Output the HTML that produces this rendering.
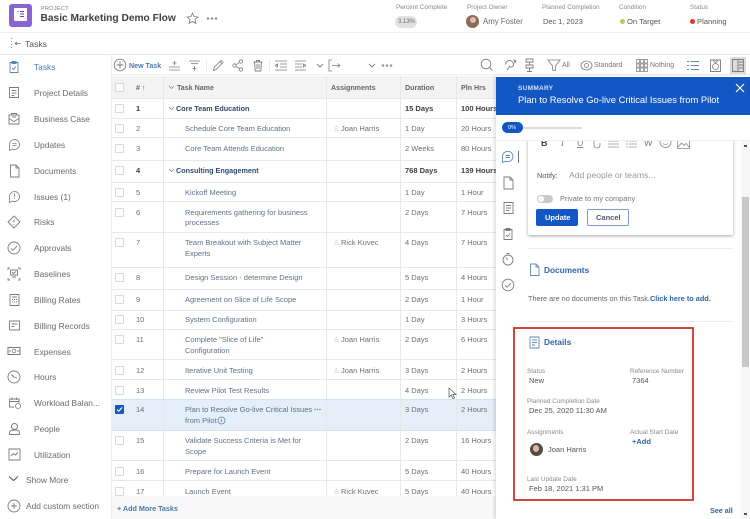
<!DOCTYPE html>
<html><head><meta charset="utf-8">
<style>
html,body{margin:0;padding:0;background:#fff}
#p{position:relative;width:750px;height:519px;overflow:hidden;background:#fff;font-family:"Liberation Sans",sans-serif;font-size:7.5px;color:#5b6675;filter:blur(.35px)}
#p div,#p span.a,#p svg.a{position:absolute}
.t{white-space:nowrap;line-height:10px}
.n{color:#5f7188}
.k{color:#2f4a6b;font-weight:bold;font-size:7.2px}
.g{color:#6e6e6e}
.d{color:#3e3e3e;font-weight:bold}
.h{color:#666;font-weight:bold;font-size:7.1px}
.s{color:#6b6b6b;font-size:8.4px}
.l{background:#e8e8e8}
.c{width:7px;height:7px;border:1px solid #d8d8d8;background:#fff;border-radius:1px;left:115px}
svg{fill:none;stroke:#7c7c7c;stroke-width:.9}
.lab{color:#8a8a8a;font-size:6.4px}
.val{color:#555;font-size:7.5px}
</style></head><body><div id="p">

<!-- header -->
<div style="left:9px;top:4px;width:23px;height:23px;background:#8a63d2;border-radius:3px"></div>
<div style="left:14px;top:8px;width:13px;height:13px;background:#fff;border-radius:1px"></div>
<svg class="a" style="left:14px;top:8px" width="13" height="13"><path d="M6 3.500h4M6 6h4M6 8.500h4M3.500 3.500h1" stroke="#6a45b5" stroke-width="1"/></svg>
<div class="t" style="left:41px;top:4px;font-size:5.4px;letter-spacing:.4px;color:#777">PROJECT</div>
<div class="t" style="left:40.5px;top:13px;font-size:10.200px;font-weight:bold;color:#3f3f3f;line-height:12px">Basic Marketing Demo Flow</div>
<svg class="a" style="left:186px;top:12px" width="13" height="13"><path d="M6.500 1l1.600 3.600 3.900.4-3 2.500.9 3.900-3.400-2-3.400 2 .9-3.900-3-2.500 3.900-.4z" stroke="#777" stroke-width=".8"/></svg>
<svg class="a" style="left:206px;top:16px" width="12" height="5"><circle cx="2" cy="2.500" r="1.300" fill="#999" stroke="none"/><circle cx="6" cy="2.500" r="1.300" fill="#999" stroke="none"/><circle cx="10" cy="2.500" r="1.300" fill="#999" stroke="none"/></svg>

<div class="t lab" style="left:396px;top:3px">Percent Complete</div>
<div style="left:395px;top:16px;width:22px;height:12px;border-radius:6px;background:#e2e2e2"></div>
<div class="t" style="left:398px;top:17px;font-size:6px;color:#666">3.13%</div>
<div class="t lab" style="left:467px;top:3px">Project Owner</div>
<div style="left:466px;top:15px;width:13px;height:13px;border-radius:50%;background:#8d6a55"></div>
<div style="left:470px;top:17px;width:6px;height:6px;border-radius:50%;background:#dcbfae"></div>
<div class="t" style="left:483px;top:17px;font-size:7.800px;color:#6b6b6b">Amy Foster</div>
<div class="t lab" style="left:542px;top:3px">Planned Completion</div>
<div class="t" style="left:543px;top:17px;color:#555;font-size:7.400px">Dec 1, 2023</div>
<div class="t lab" style="left:619px;top:3px">Condition</div>
<div style="left:620px;top:19px;width:5px;height:5px;border-radius:50%;background:#a4d65e"></div>
<div class="t" style="left:627px;top:17px;color:#555;font-size:7.600px">On Target</div>
<div class="t lab" style="left:690px;top:3px">Status</div>
<div style="left:690px;top:19px;width:5px;height:5px;border-radius:50%;background:#e0342c"></div>
<div class="t" style="left:697px;top:17px;color:#555;font-size:7.600px">Planning</div>
<div class="l" style="left:0;top:32px;width:750px;height:1px;background:#efefef"></div>

<svg class="a" style="left:10px;top:37px" width="12" height="13"><path d="M1.500 1v1M1.500 4v1M1.500 7v1M1.500 10v1M5 6.500h6M5 6.500l2-1.500M5 6.500l2 1.500" stroke="#777" stroke-width=".8"/></svg>
<div class="t" style="left:25px;top:39px;font-size:8.600px;color:#555">Tasks</div>
<div class="l" style="left:0;top:54px;width:750px;height:1px;background:#e8e8e8"></div>

<!-- sidebar -->
<div class="l" style="left:111px;top:55px;width:1px;height:464px;background:#ececec"></div>
<svg class="a" style="left:8px;top:60px" width="12" height="14"><path d="M2 2.500h8v10H2zM4 1.500h4v2H4zM4 8l1.500 1.500L8 6.500" stroke="#5a88b5"/></svg>
<svg class="a" style="left:8px;top:86px" width="12" height="14"><path d="M1.500 1.500h9v10h-9zM3.500 4.500h5M3.500 7h5M3.500 9.500h2.500"/></svg>
<svg class="a" style="left:7px;top:112px" width="14" height="14"><path d="M2 3h10v9H2zM4.500 3V1.500h5V3M2 6.500l5 3 5-3M5 5h4"/></svg>
<svg class="a" style="left:8px;top:138px" width="13" height="14"><path d="M1.500 6.500a5 5 0 1 1 3 4.600L1.500 12.500zM4.500 5.500h4M4.500 7.500h4" stroke-width=".8"/></svg>
<svg class="a" style="left:9px;top:164px" width="11" height="14"><path d="M1.500 1h5.500l3 3v9h-8.500zM7 1v3h3"/></svg>
<svg class="a" style="left:8px;top:190px" width="13" height="14"><path d="M1.500 6.500a5 5 0 1 1 3 4.600L1.500 12.500zM6.500 3.500v3.500M6.500 8v1" stroke-width=".8"/></svg>
<svg class="a" style="left:7px;top:215px" width="14" height="14"><path d="M7 1l6 6-6 6-6-6zM7 4.500v3M7 9v.8"/></svg>
<svg class="a" style="left:7px;top:241px" width="14" height="14"><circle cx="7" cy="7" r="6"/><path d="M4 7.500l2 1.700 4-4"/></svg>
<svg class="a" style="left:7px;top:267px" width="14" height="14"><path d="M3 1H1v2M11 1h2v2M1 11v2h2M13 11v2h-2M3.500 3h7v5h-7zM5 5l1.500 1.500L9 4.500M5 10h4"/></svg>
<svg class="a" style="left:8px;top:293px" width="13" height="14"><path d="M2 1.500h9v11H2zM4 4h5M4 6.500h1M6 6.500h1M8 6.500h1M4 9h1M6 9h1M8 9h1"/></svg>
<svg class="a" style="left:8px;top:319px" width="14" height="14"><path d="M1.500 2h10v9h-10zM3.500 5h6M3.500 7.500h3"/></svg>
<svg class="a" style="left:7px;top:345px" width="14" height="12"><path d="M1 2.500h12v7H1z" stroke-width="1.100"/><circle cx="7" cy="6" r="1.800" stroke-width=".8"/><path d="M3 5v2M11 5v2"/></svg>
<svg class="a" style="left:7px;top:370px" width="14" height="14"><circle cx="7" cy="7" r="6"/><path d="M7 7L4 4.500M7 7l3 1"/></svg>
<svg class="a" style="left:8px;top:396px" width="14" height="14"><path d="M1.500 3h9.500v4M6 11H1.500V3M1.500 5.500h9.500M4 1.500v2.500M8.500 1.500v2.500"/><circle cx="10" cy="10" r="2.500" stroke-width=".8"/></svg>
<svg class="a" style="left:8px;top:422px" width="13" height="14"><circle cx="6.500" cy="4.500" r="3"/><path d="M1.500 12.500v-2c0-1.700 1.500-2.500 5-2.500s5 .8 5 2.500v2z"/></svg>
<svg class="a" style="left:8px;top:448px" width="13" height="13"><path d="M1 1h11v11H1zM3 8l2.500-2.500 2 1.500L10 4.500"/></svg>
<svg class="a" style="left:8px;top:475px" width="11" height="8"><path d="M1 1.500l4.500 4 4.500-4" stroke="#555" stroke-width="1.100"/></svg>
<svg class="a" style="left:7px;top:499px" width="14" height="14"><circle cx="7" cy="7" r="6"/><path d="M7 4v6M4 7h6"/></svg>

<div class="t s" style="left:34px;top:62px;color:#4f7aa8">Tasks</div>
<div class="t s" style="left:34px;top:88px">Project Details</div>
<div class="t s" style="left:34px;top:114px">Business Case</div>
<div class="t s" style="left:34px;top:140px">Updates</div>
<div class="t s" style="left:34px;top:166px">Documents</div>
<div class="t s" style="left:34px;top:192px">Issues (1)</div>
<div class="t s" style="left:34px;top:217px">Risks</div>
<div class="t s" style="left:34px;top:243px">Approvals</div>
<div class="t s" style="left:34px;top:269px">Baselines</div>
<div class="t s" style="left:34px;top:295px">Billing Rates</div>
<div class="t s" style="left:34px;top:321px">Billing Records</div>
<div class="t s" style="left:34px;top:347px">Expenses</div>
<div class="t s" style="left:34px;top:372px">Hours</div>
<div class="t s" style="left:34px;top:398px">Workload Balan...</div>
<div class="t s" style="left:34px;top:424px">People</div>
<div class="t s" style="left:34px;top:450px">Utilization</div>
<div class="t s" style="left:26px;top:475px">Show More</div>
<div class="t s" style="left:26px;top:501px">Add custom section</div>

<!-- toolbar -->
<svg class="a" style="left:113px;top:58px" width="14" height="14"><circle cx="7" cy="7" r="5.800"/><path d="M7 3.500v7M3.500 7h7"/></svg>
<div class="t" style="left:129px;top:61px;font-weight:bold;color:#4d78a8;font-size:7.100px">New Task</div>
<svg class="a" style="left:169px;top:60px" width="11" height="12"><path d="M5.500 1v4M3.500 3h4M0 7h11M0 10h11" stroke-width=".8"/></svg>
<svg class="a" style="left:189px;top:60px" width="11" height="12"><path d="M0 1h11M2 3.500h7M5.500 6v5M3.500 8.500h4" stroke-width=".8"/></svg>
<div style="left:206px;top:59px;width:1px;height:13px;background:#eee"></div>
<svg class="a" style="left:212px;top:59px" width="12" height="13"><path d="M1.500 11.500l.6-3L9 1.500l2 2-7 7zM8 3l2 2" stroke-width=".8"/></svg>
<svg class="a" style="left:232px;top:59px" width="11" height="13"><circle cx="2.500" cy="6.500" r="1.700" stroke-width=".8"/><circle cx="9" cy="2.500" r="1.700" stroke-width=".8"/><circle cx="9" cy="10.500" r="1.700" stroke-width=".8"/><path d="M4 5.700l3.500-2.400M4 7.300l3.500 2.400" stroke-width=".8"/></svg>
<svg class="a" style="left:252px;top:59px" width="12" height="13"><path d="M1.500 3h9M4.500 3V1.500h3V3M2.500 3l.7 9h5.600l.7-9M5 5v5M7 5v5"/></svg>
<div style="left:269px;top:59px;width:1px;height:13px;background:#eee"></div>
<svg class="a" style="left:275px;top:60px" width="12" height="11"><path d="M0 1h12M5 4h7M5 7h7M0 10h12M0 5.500l2.500-1.500v3z" stroke-width=".8"/></svg>
<svg class="a" style="left:295px;top:60px" width="11" height="11"><path d="M0 1h11M0 4h7M0 7h7M0 10h11M11 5.500l-2.500-1.500v3z" stroke-width=".8"/></svg>
<svg class="a" style="left:316px;top:63px" width="8" height="6"><path d="M1 1l3 3 3-3"/></svg>
<svg class="a" style="left:328px;top:59px" width="13" height="13"><path d="M4 1H1v11h3M4 6.500h8M9.500 4.500l2.500 2-2.500 2" stroke-width=".8"/></svg>
<svg class="a" style="left:368px;top:63px" width="8" height="6"><path d="M1 1l3 3 3-3"/></svg>
<svg class="a" style="left:381px;top:63px" width="12" height="5"><circle cx="2" cy="2.500" r="1.300" fill="#999" stroke="none"/><circle cx="6" cy="2.500" r="1.300" fill="#999" stroke="none"/><circle cx="10" cy="2.500" r="1.300" fill="#999" stroke="none"/></svg>
<svg class="a" style="left:480px;top:58px" width="13" height="14"><circle cx="6" cy="6" r="4.800"/><path d="M9.500 9.500l3 3"/></svg>
<svg class="a" style="left:504px;top:59px" width="14" height="13"><path d="M1.500 5.500a4 4 0 0 1 8 0c0 2.500-3 3-4 2L3 11"/><path d="M10 1l2 1-1 1.500z"/></svg>
<svg class="a" style="left:525px;top:58px" width="9" height="15"><path d="M1 1h7v3H1zM4.500 4v3M1 7h7v3H1zM4.500 10v3M2 13.500h5"/></svg>
<svg class="a" style="left:547px;top:58px" width="14" height="14"><path d="M1 2h12L8.500 8v4.500L5.500 12V8z" stroke-width=".8"/></svg>
<div class="t" style="left:562px;top:61px;color:#777;font-size:7px">All</div>
<svg class="a" style="left:580px;top:60px" width="13" height="11"><ellipse cx="6.500" cy="5.500" rx="5.500" ry="4.500" stroke-width=".8"/><circle cx="6.500" cy="5.500" r="2" stroke-width=".8"/></svg>
<div class="t" style="left:594px;top:61px;color:#777;font-size:7px">Standard</div>
<svg class="a" style="left:636px;top:59px" width="12" height="13"><path d="M.5.500h3v3.500h-3zM4.500.5h3v3.500h-3zM8.500.5h3v3.500h-3zM.5 5h3v3h-3zM4.500 5h3v3h-3zM8.500 5h3v3h-3zM.5 9h3v3.500h-3zM4.500 9h3v3.500h-3zM8.500 9h3v3.500h-3z" stroke-width=".7"/></svg>
<div class="t" style="left:650px;top:61px;color:#777;font-size:7px">Nothing</div>
<svg class="a" style="left:687px;top:60px" width="12" height="11"><path d="M0 1.500h2M3.500 1.500H12M0 5.500h2M3.500 5.500H12M0 9.500h2M3.500 9.500H12" stroke="#6c89a8"/></svg>
<svg class="a" style="left:710px;top:59px" width="11" height="13"><path d="M.5 1h10v11.500H.5z"/><circle cx="5.500" cy="7.500" r="3" stroke-width=".8"/><path d="M3 1l2.500 3L8 1" stroke-width=".8"/></svg>
<div style="left:730px;top:57px;width:16px;height:17px;background:#dcdcdc;border-radius:1px"></div>
<svg class="a" style="left:732px;top:59px" width="12" height="13"><path d="M.5.500h11v12H.5zM6 .5v12M7 3h4M7 6h4M7 9h4"/></svg>
<div style="left:112px;top:74px;width:638px;height:1px;background:#efefef"></div>

<!-- table -->
<div style="left:112px;top:76px;width:384px;height:22px;background:#f3f3f3"></div>
<div style="left:112px;top:400px;width:384px;height:30px;background:#e4eff9"></div>
<div style="left:112px;top:496px;width:384px;height:23px;background:#f8f8f8"></div>

<div class="l" style="left:163px;top:76px;width:1px;height:420px"></div>
<div class="l" style="left:326px;top:76px;width:1px;height:420px"></div>
<div class="l" style="left:400px;top:76px;width:1px;height:420px"></div>
<div class="l" style="left:456px;top:76px;width:1px;height:420px"></div>

<div class="l" style="left:112px;top:98px;width:384px;height:1px"></div>
<div class="l" style="left:112px;top:118px;width:384px;height:1px"></div>
<div class="l" style="left:112px;top:137px;width:384px;height:1px"></div>
<div class="l" style="left:112px;top:160px;width:384px;height:1px"></div>
<div class="l" style="left:112px;top:182px;width:384px;height:1px"></div>
<div class="l" style="left:112px;top:201px;width:384px;height:1px"></div>
<div class="l" style="left:112px;top:232px;width:384px;height:1px"></div>
<div class="l" style="left:112px;top:267px;width:384px;height:1px"></div>
<div class="l" style="left:112px;top:289px;width:384px;height:1px"></div>
<div class="l" style="left:112px;top:310px;width:384px;height:1px"></div>
<div class="l" style="left:112px;top:329px;width:384px;height:1px"></div>
<div class="l" style="left:112px;top:359px;width:384px;height:1px"></div>
<div class="l" style="left:112px;top:379px;width:384px;height:1px"></div>
<div class="l" style="left:112px;top:399px;width:384px;height:1px;background:#d5e3f0"></div>
<div class="l" style="left:112px;top:430px;width:384px;height:1px;background:#d5e3f0"></div>
<div class="l" style="left:112px;top:460px;width:384px;height:1px"></div>
<div class="l" style="left:112px;top:480px;width:384px;height:1px"></div>

<!-- header row -->
<div class="c" style="top:83px"></div>
<div class="t h" style="left:136px;top:83px"># ↑</div>
<svg class="a" style="left:168px;top:85px" width="7" height="5"><path d="M1 1l2.500 2.500L6 1" stroke-width=".7"/></svg>
<div class="t h" style="left:177px;top:83px">Task Name</div>
<div class="t h" style="left:331px;top:83px">Assignments</div>
<div class="t h" style="left:405px;top:83px">Duration</div>
<div class="t h" style="left:461px;top:83px">Pln Hrs</div>

<!-- rows -->
<div class="c" style="top:104px"></div><div class="t d" style="left:136px;top:104px">1</div>
<svg class="a" style="left:168px;top:106px" width="7" height="5"><path d="M1 1l2.500 2.500L6 1" stroke-width=".7"/></svg>
<div class="t k" style="left:176px;top:104px">Core Team Education</div>
<div class="t d" style="left:405px;top:104px">15 Days</div><div class="t d" style="left:461px;top:104px">100 Hours</div>

<div class="c" style="top:124px"></div><div class="t g" style="left:136px;top:124px">2</div>
<div class="t n" style="left:185px;top:124px">Schedule Core Team Education</div>
<div class="t g" style="left:333px;top:124px;color:#ccc">♙</div><div class="t g" style="left:341px;top:124px">Joan Harris</div>
<div class="t g" style="left:405px;top:124px">1 Day</div><div class="t g" style="left:461px;top:124px">20 Hours</div>

<div class="c" style="top:144px"></div><div class="t g" style="left:136px;top:144px">3</div>
<div class="t n" style="left:185px;top:144px">Core Team Attends Education</div>
<div class="t g" style="left:405px;top:144px">2 Weeks</div><div class="t g" style="left:461px;top:144px">80 Hours</div>

<div class="c" style="top:166px"></div><div class="t d" style="left:136px;top:166px">4</div>
<svg class="a" style="left:168px;top:168px" width="7" height="5"><path d="M1 1l2.500 2.500L6 1" stroke-width=".7"/></svg>
<div class="t k" style="left:176px;top:166px">Consulting Engagement</div>
<div class="t d" style="left:405px;top:166px">768 Days</div><div class="t d" style="left:461px;top:166px">139 Hours</div>

<div class="c" style="top:188px"></div><div class="t g" style="left:136px;top:188px">5</div>
<div class="t n" style="left:185px;top:188px">Kickoff Meeting</div>
<div class="t g" style="left:405px;top:188px">1 Day</div><div class="t g" style="left:461px;top:188px">1 Hour</div>

<div class="c" style="top:208px"></div><div class="t g" style="left:136px;top:208px">6</div>
<div class="t n" style="left:185px;top:208px">Requirements gathering for business</div>
<div class="t n" style="left:185px;top:218px">processes</div>
<div class="t g" style="left:405px;top:208px">2 Days</div><div class="t g" style="left:461px;top:208px">7 Hours</div>

<div class="c" style="top:238px"></div><div class="t g" style="left:136px;top:238px">7</div>
<div class="t n" style="left:185px;top:238px">Team Breakout with Subject Matter</div>
<div class="t n" style="left:185px;top:249px">Experts</div>
<div class="t g" style="left:333px;top:238px;color:#ccc">♙</div><div class="t g" style="left:341px;top:238px">Rick Kuvec</div>
<div class="t g" style="left:405px;top:238px">4 Days</div><div class="t g" style="left:461px;top:238px">7 Hours</div>

<div class="c" style="top:273px"></div><div class="t g" style="left:136px;top:273px">8</div>
<div class="t n" style="left:185px;top:273px">Design Session - determine Design</div>
<div class="t g" style="left:405px;top:273px">5 Days</div><div class="t g" style="left:461px;top:273px">4 Hours</div>

<div class="c" style="top:295px"></div><div class="t g" style="left:136px;top:295px">9</div>
<div class="t n" style="left:185px;top:295px">Agreement on Slice of Life Scope</div>
<div class="t g" style="left:405px;top:295px">2 Days</div><div class="t g" style="left:461px;top:295px">1 Hour</div>

<div class="c" style="top:315px"></div><div class="t g" style="left:136px;top:315px">10</div>
<div class="t n" style="left:185px;top:315px">System Configuration</div>
<div class="t g" style="left:405px;top:315px">1 Day</div><div class="t g" style="left:461px;top:315px">3 Hours</div>

<div class="c" style="top:335px"></div><div class="t g" style="left:136px;top:335px">11</div>
<div class="t n" style="left:185px;top:335px">Complete "Slice of Life"</div>
<div class="t n" style="left:185px;top:346px">Configuration</div>
<div class="t g" style="left:333px;top:335px;color:#ccc">♙</div><div class="t g" style="left:341px;top:335px">Joan Harris</div>
<div class="t g" style="left:405px;top:335px">2 Days</div><div class="t g" style="left:461px;top:335px">6 Hours</div>

<div class="c" style="top:366px"></div><div class="t g" style="left:136px;top:366px">12</div>
<div class="t n" style="left:185px;top:366px">Iterative Unit Testing</div>
<div class="t g" style="left:333px;top:366px;color:#ccc">♙</div><div class="t g" style="left:341px;top:366px">Joan Harris</div>
<div class="t g" style="left:405px;top:366px">3 Days</div><div class="t g" style="left:461px;top:366px">2 Hours</div>

<div class="c" style="top:386px"></div><div class="t g" style="left:136px;top:386px">13</div>
<div class="t n" style="left:185px;top:386px">Review Pilot Test Results</div>
<div class="t g" style="left:405px;top:386px">4 Days</div><div class="t g" style="left:461px;top:386px">2 Hours</div>

<div style="left:115px;top:405px;width:7px;height:7px;border:1px solid #1857b8;background:#1857b8;border-radius:1px"></div>
<svg class="a" style="left:116px;top:406px" width="7" height="7"><path d="M1 3.500l1.800 1.800L6 1.500" stroke="#fff" stroke-width="1.200"/></svg>
<div class="t g" style="left:136px;top:405px">14</div>
<div class="t n" style="left:185px;top:405px">Plan to Resolve Go-live Critical Issues</div>
<div class="t n" style="left:185px;top:416px">from Pilot</div>
<svg class="a" style="left:217px;top:416px" width="9" height="9"><circle cx="4.500" cy="4.500" r="3.500" stroke="#5f7fa5" stroke-width=".8"/><path d="M4.500 3v3" stroke="#5f7fa5" stroke-width=".8"/></svg>
<svg class="a" style="left:314px;top:408px" width="7" height="3"><circle cx="1" cy="1.500" r=".7" fill="#777" stroke="none"/><circle cx="3.500" cy="1.500" r=".7" fill="#777" stroke="none"/><circle cx="6" cy="1.500" r=".7" fill="#777" stroke="none"/></svg>
<div class="t g" style="left:405px;top:405px">3 Days</div><div class="t g" style="left:461px;top:405px">2 Hours</div>

<div class="c" style="top:436px"></div><div class="t g" style="left:136px;top:436px">15</div>
<div class="t n" style="left:185px;top:436px">Validate Success Criteria is Met for</div>
<div class="t n" style="left:185px;top:447px">Scope</div>
<div class="t g" style="left:405px;top:436px">2 Days</div><div class="t g" style="left:461px;top:436px">16 Hours</div>

<div class="c" style="top:467px"></div><div class="t g" style="left:136px;top:467px">16</div>
<div class="t n" style="left:185px;top:467px">Prepare for Launch Event</div>
<div class="t g" style="left:405px;top:467px">5 Days</div><div class="t g" style="left:461px;top:467px">40 Hours</div>

<div class="c" style="top:487px"></div><div class="t g" style="left:136px;top:487px">17</div>
<div class="t n" style="left:185px;top:487px">Launch Event</div>
<div class="t g" style="left:333px;top:487px;color:#ccc">♙</div><div class="t g" style="left:341px;top:487px">Rick Kuvec</div>
<div class="t g" style="left:405px;top:487px">5 Days</div><div class="t g" style="left:461px;top:487px">40 Hours</div>

<div class="t" style="left:117px;top:504px;font-weight:bold;color:#4d78a8;font-size:7.200px">+ Add More Tasks</div>

<svg class="a" style="left:448px;top:387px" width="9" height="13"><path d="M1 1v9l2.300-2 1.700 3.500 1.500-.7-1.700-3.300H8z" fill="#fff" stroke="#555" stroke-width=".7"/></svg>

<!-- right panel -->
<div style="left:496px;top:76px;width:254px;height:443px;background:#fff;box-shadow:-2px 0 3px rgba(0,0,0,.12)"></div>

<!-- scrollbar -->
<div style="left:741px;top:140px;width:9px;height:379px;background:#f6f6f6"></div>
<div style="left:742px;top:197px;width:7px;height:170px;background:#c8c8c8"></div>
<div style="left:744px;top:145px;width:3px;height:2px;background:#555"></div>
<div style="left:744px;top:513px;width:3px;height:2px;background:#555"></div>

<!-- update card -->
<div style="left:528px;top:135px;width:205px;height:100px;background:#fff;box-shadow:0 1px 3px rgba(0,0,0,.35);border-radius:0 0 2px 2px"></div>
<div class="t" style="left:541px;top:138px;font-size:9px;font-weight:bold;color:#444">B</div>
<div class="t" style="left:561px;top:138px;font-size:9px;color:#888;font-family:'Liberation Serif',serif;font-style:italic">I</div>
<div class="t" style="left:577px;top:138px;font-size:9px;color:#888;text-decoration:underline">U</div>
<svg class="a" style="left:592px;top:140px" width="10" height="9"><path d="M2 1v4c0 2 1 3 3 3s3-1 3-3V3" stroke="#888" stroke-width=".8"/></svg>
<svg class="a" style="left:608px;top:140px" width="11" height="8"><path d="M0 1h11M0 4h11M0 7h11" stroke="#999" stroke-width=".8"/></svg>
<svg class="a" style="left:626px;top:140px" width="11" height="8"><path d="M0 1h2M3 1h8M0 4h2M3 4h8M0 7h2M3 7h8" stroke="#999" stroke-width=".8"/></svg>
<div class="t" style="left:644px;top:138px;font-size:9px;color:#777">W</div>
<svg class="a" style="left:659px;top:139px" width="13" height="10"><circle cx="6.500" cy="3" r="5.500" stroke="#888" stroke-width=".8"/><path d="M4 4.500c1.500 1.500 3.500 1.500 5 0" stroke="#888" stroke-width=".8"/></svg>
<svg class="a" style="left:677px;top:139px" width="13" height="10"><path d="M.5.500h12v9H.5zM1 8l3.500-4 2.500 2.500L9 4.500l3 3.500" stroke="#888" stroke-width=".8"/></svg>
<div style="left:496px;top:115px;width:254px;height:25px;background:#fff"></div>
<div style="left:496px;top:140px;width:254px;height:1px;background:#f0f0f0"></div>

<div class="t" style="left:537px;top:171px;font-size:7.300px;color:#555">Notify:</div>
<div class="t" style="left:569px;top:170px;font-size:8.600px;color:#9a9a9a">Add people or teams...</div>
<div style="left:537px;top:195px;width:16px;height:8px;background:#c9c9c9;border-radius:4px"></div>
<div style="left:538px;top:196px;width:6px;height:6px;background:#fff;border-radius:50%"></div>
<div class="t" style="left:560px;top:194px;font-size:7.400px;color:#777">Private to my company</div>
<div style="left:536px;top:209px;width:42px;height:17px;background:#1257c4;border-radius:2px"></div>
<div class="t" style="left:545px;top:213px;font-size:7.500px;font-weight:bold;color:#fff">Update</div>
<div style="left:587px;top:209px;width:40px;height:15px;border:1px solid #7f9cc0;border-radius:2px;background:#fff"></div>
<div class="t" style="left:596px;top:213px;font-size:7.500px;font-weight:bold;color:#557">Cancel</div>

<!-- panel head -->
<div style="left:496px;top:77px;width:254px;height:38px;background:#1257c4"></div>
<div class="t" style="left:518px;top:84px;font-size:6.500px;font-weight:bold;letter-spacing:.3px;color:#cfe0f7">SUMMARY</div>
<div class="t" style="left:518px;top:95px;font-size:9.400px;color:#fff;line-height:10px">Plan to Resolve Go-live Critical Issues from Pilot</div>
<svg class="a" style="left:734px;top:82px" width="12" height="12"><path d="M2 2l8 8M10 2l-8 8" stroke="#fff" stroke-width="1.200"/></svg>

<div style="left:502px;top:122px;width:21px;height:11px;background:#1257c4;border-radius:6px"></div>
<div class="t" style="left:508px;top:123px;font-size:5.500px;color:#fff">0%</div>
<div style="left:523px;top:127px;width:59px;height:2px;background:#dcdcdc"></div>

<!-- panel side icons -->
<svg class="a" style="left:501px;top:150px" width="14" height="14"><path d="M1.500 6.500a5.200 5.200 0 1 1 3 4.700L1.500 12.500zM4.500 5.500h4.500M4.500 7.500h4.500" stroke="#5a88b5"/></svg>
<div style="left:518px;top:151px;width:1px;height:12px;background:#777"></div>
<svg class="a" style="left:502px;top:176px" width="13" height="14"><path d="M2 1h6l3 3v9H2zM8 1v3h3"/></svg>
<svg class="a" style="left:502px;top:201px" width="13" height="14"><path d="M2 1.500h9v11H2zM4 4.500h5M4 7h5M4 9.500h3"/></svg>
<svg class="a" style="left:502px;top:227px" width="12" height="14"><path d="M2 2.500h8v10H2zM4 1.500h4v2H4zM4 8l1.500 1.500L8 6.500"/></svg>
<svg class="a" style="left:501px;top:252px" width="14" height="14"><circle cx="7" cy="8" r="5"/><path d="M7 8L5 5.500M5.500 1.500h3"/></svg>
<svg class="a" style="left:501px;top:278px" width="14" height="14"><circle cx="7" cy="7" r="5.800"/><path d="M4 7.500l2 1.700 4-4"/></svg>

<div style="left:528px;top:248px;width:205px;height:1px;background:#ececec"></div>
<svg class="a" style="left:529px;top:263px" width="11" height="13"><path d="M1.500 1h5.500l3 3v8.500h-8.500zM7 1v3h3" stroke="#5f8ab8"/></svg>
<div class="t" style="left:544px;top:265px;font-size:8.300px;font-weight:bold;color:#2e65a8">Documents</div>
<div class="t" style="left:528px;top:294px;font-size:7.300px;color:#666">There are no documents on this Task.<span style="color:#2e65a8;font-weight:bold">Click here to add.</span></div>
<div style="left:528px;top:321px;width:205px;height:1px;background:#ececec"></div>

<!-- details -->
<div style="left:513px;top:327px;width:177px;height:170px;border:2px solid #d0483c"></div>
<svg class="a" style="left:529px;top:336px" width="11" height="13"><path d="M1 1h9v11H1zM3 4h5M3 6.500h5M3 9h3" stroke="#5f8ab8"/></svg>
<div class="t" style="left:544px;top:337px;font-size:8.300px;font-weight:bold;color:#2e65a8">Details</div>
<div class="t lab" style="left:527px;top:367px">Status</div>
<div class="t val" style="left:529px;top:376px">New</div>
<div class="t lab" style="left:630px;top:367px">Reference Number</div>
<div class="t val" style="left:632px;top:376px">7364</div>
<div class="t lab" style="left:527px;top:397px">Planned Completion Date</div>
<div class="t val" style="left:529px;top:406px">Dec 25, 2020 11:30 AM</div>
<div class="t lab" style="left:527px;top:428px">Assignments</div>
<div class="t lab" style="left:630px;top:428px">Actual Start Date</div>
<div class="t" style="left:632px;top:437px;font-size:7.500px;font-weight:bold;color:#2e65a8">+Add</div>
<div style="left:530px;top:443px;width:13px;height:13px;border-radius:50%;background:#5a4a42"></div>
<div style="left:533px;top:445px;width:6px;height:7px;border-radius:50%;background:#d9b7a2"></div>
<div class="t val" style="left:548px;top:445px">Joan Harris</div>
<div class="t lab" style="left:527px;top:475px">Last Update Date</div>
<div class="t val" style="left:529px;top:484px">Feb 18, 2021 1:31 PM</div>
<div class="t" style="left:710px;top:506px;font-size:7.200px;font-weight:bold;color:#2e65a8">See all</div>

</div></body></html>
